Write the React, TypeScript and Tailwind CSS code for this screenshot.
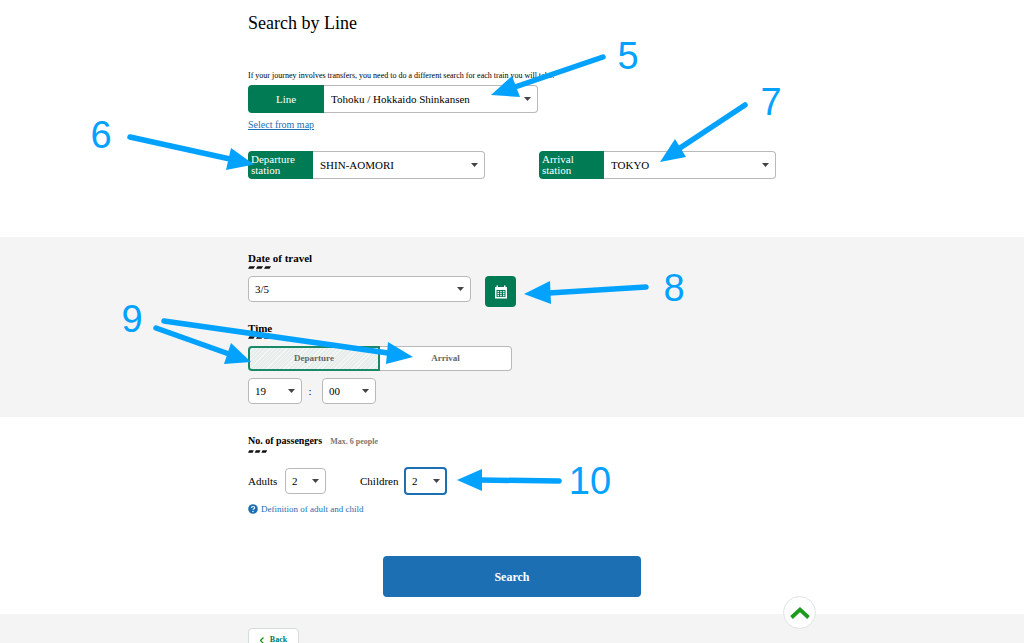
import type { ReactNode } from "react";
import clsx from "clsx";

type SelectProps = {
  id: string;
  options: string[];
  className?: string;
  selectClassName?: string;
};

function SelectBox({ id, options, className, selectClassName }: SelectProps) {
  return (
    <div className={clsx("relative", className)}>
      <select
        id={id}
        aria-label={id}
        className={clsx(
          "block h-full w-full appearance-none bg-white pr-5 text-[11px] leading-4 text-black outline-none",
          selectClassName
        )}
      >
        {options.map((o) => (
          <option key={o}>{o}</option>
        ))}
      </select>
      <svg viewBox="0 0 7 4" className="pointer-events-none absolute top-1/2 right-[7px] h-1 w-[7px] -translate-y-1/2" aria-hidden="true">
        <path d="M0 0h7L3.500 4z" fill="#444" />
      </svg>
    </div>
  );
}

function LabelledSelect({ label, id, options, className, labelClassName }: {
  label: string;
  id: string;
  options: string[];
  className: string;
  labelClassName: string;
}) {
  return (
    <div className={clsx("flex h-7", className)}>
      <label htmlFor={id} className={clsx("flex shrink-0 items-center rounded-l-[4px] bg-[#007b53] text-[11px] leading-[11px] text-white", labelClassName)}>
        {label}
      </label>
      <SelectBox id={id} options={options} className="flex-1" selectClassName="rounded-r-[4px] border border-l-0 border-[#b9b9b9] pl-[7px]" />
    </div>
  );
}

function Heading({ children, note }: { children: ReactNode; note?: string }) {
  return (
    <div>
      <h2 className={clsx("flex items-baseline gap-2 leading-[14px] font-bold text-black", note ? "text-[10px]" : "text-[11px]")}>
        {children}
        {note && <span className="text-[8px] text-[#777]">{note}</span>}
      </h2>
      <svg viewBox="0 0 24 3" className={clsx("mt-px h-[3px]", note ? "w-5" : "w-6")} preserveAspectRatio="none" aria-hidden="true">
        <path d="M1.500 .3h5.500l-1.500 2.400h-5.500zM9.500 .3h5.500l-1.500 2.400h-5.500zM17.500 .3h5.500l-1.500 2.400h-5.500z" fill="#111" />
      </svg>
    </div>
  );
}

const arrows = [
  { from: [603, 57], to: [515, 87], head: "491,95 512,76 520,97" },
  { from: [130, 137], to: [230, 159], head: "254,164.500 231,148 226,170" },
  { from: [745, 105], to: [680, 148], head: "660,162 675,139 686,157" },
  { from: [646, 287], to: [549, 293], head: "524,294 550,281 551,304" },
  { from: [164, 321], to: [388, 353], head: "413,357 388,342 386,364" },
  { from: [156, 328], to: [229, 354], head: "251,362 231,343 224,364" },
  { from: [559, 481], to: [480, 480], head: "457,480 482,469 482,491" },
];

const steps = [
  { n: "5", x: 628, y: 69 },
  { n: "6", x: 101, y: 148 },
  { n: "7", x: 771, y: 115 },
  { n: "8", x: 674, y: 301 },
  { n: "9", x: 132, y: 332 },
  { n: "10", x: 590, y: 494 },
];

// Numbered guide arrows over the form
function Guide() {
  return (
    <svg
      viewBox="0 0 1024 643"
      className="pointer-events-none absolute top-0 left-1/2 h-[643px] w-[1024px] max-w-none -translate-x-1/2"
      fill="#03a2ff"
      stroke="#03a2ff"
    >
      {arrows.map((a) => (
        <g key={a.head}>
          <line x1={a.from[0]} y1={a.from[1]} x2={a.to[0]} y2={a.to[1]} strokeWidth="5.500" strokeLinecap="round" />
          <polygon points={a.head} stroke="none" />
        </g>
      ))}
      {steps.map((s) => (
        <text key={s.n} x={s.x} y={s.y} textAnchor="middle" stroke="none" className="font-['Liberation_Sans',sans-serif] text-[38px]">
          {s.n}
        </text>
      ))}
    </svg>
  );
}

export default function App() {
  return (
    <div className="relative h-screen overflow-hidden bg-white font-['Liberation_Serif',serif] text-black">
      <section className="pt-3 pb-[58px]">
        <div className="mx-auto max-w-[528px]">
          <h1 className="text-lg leading-[22px]">Search by Line</h1>
          <p className="mt-9 text-[8px] leading-3 whitespace-nowrap">
            If your journey involves transfers, you need to do a different search for each train you will take.
          </p>
          <LabelledSelect
            label="Line"
            id="line"
            options={["Tohoku / Hokkaido Shinkansen"]}
            className="mt-[3px] w-[290px]"
            labelClassName="w-[76px] justify-center"
          />
          <a href="#map" className="mt-1.5 block w-fit text-[10px] leading-3 text-[#1d6fb3] underline">
            Select from map
          </a>
          <div className="mt-5 flex justify-between">
            <LabelledSelect label="Departure station" id="departure-station" options={["SHIN-AOMORI"]} className="w-[237px]" labelClassName="w-[65px] pl-[3px]" />
            <LabelledSelect label="Arrival station" id="arrival-station" options={["TOKYO"]} className="w-[237px]" labelClassName="w-[65px] pr-6 pl-[3px]" />
          </div>
        </div>
      </section>

      <section className="bg-[#f4f4f4] pt-3.5 pb-[13px]">
        <div className="mx-auto max-w-[528px]">
          <Heading>Date of travel</Heading>
          <div className="mt-[7px] flex gap-3.5">
            <SelectBox id="date" options={["3/5"]} className="h-[26px] w-[223px]" selectClassName="rounded-[4px] border border-[#b9b9b9] pl-1.5" />
            <button type="button" aria-label="Calendar" className="flex h-[31px] w-[31px] items-center justify-center rounded-[4px] bg-[#007b53]">
              <svg viewBox="0 0 14 14" className="h-3.5 w-3.5" aria-hidden="true">
                <path d="M1 2h1.500V.5h1.500V2h6V.5h1.500V2H13v11.500H1z" fill="#fff" />
                <path d="M2.500 5h9v7h-9z" fill="#007b53" />
                <path d="M3.500 6h1.500v1.200H3.500zM6.200 6h1.500v1.200H6.200zM9 6h1.500v1.200H9zM3.500 8h1.500v1.200H3.500zM6.200 8h1.500v1.200H6.200zM9 8h1.500v1.200H9zM3.500 10h1.500v1.200H3.500zM6.200 10h1.500v1.200H6.200zM9 10h1.500v1.200H9z" fill="#fff" />
              </svg>
            </button>
          </div>

          <div className="mt-3.5">
            <Heading>Time</Heading>
          </div>
          <div className="mt-[7px] flex h-[25px] w-[264px] text-[9px] font-bold text-[#666]">
            <label className="flex w-1/2 items-center justify-center rounded-l-[4px] border-2 border-[#1a8a66] bg-[#e6edea] bg-[repeating-linear-gradient(135deg,transparent_0_2px,#f3f7f5_2px_3px)]">
              <input type="radio" name="time" defaultChecked className="sr-only" />
              Departure
            </label>
            <label className="flex w-1/2 items-center justify-center rounded-r-[4px] border border-l-0 border-[#b9b9b9] bg-white">
              <input type="radio" name="time" className="sr-only" />
              Arrival
            </label>
          </div>
          <div className="mt-[7px] flex h-[26px] items-center">
            <SelectBox id="hour" options={["19"]} className="h-full w-[54px]" selectClassName="rounded-[4px] border border-[#b9b9b9] pl-1.5" />
            <span className="w-5 pr-1 text-center text-[11px]">:</span>
            <SelectBox id="minute" options={["00"]} className="h-full w-[54px]" selectClassName="rounded-[4px] border border-[#b9b9b9] pl-1.5" />
          </div>
        </div>
      </section>

      <section className="pt-[17px] pb-[17px]">
        <div className="mx-auto max-w-[528px]">
          <Heading note="Max. 6 people">No. of passengers</Heading>
          <div className="mt-3.5 flex h-7 items-center text-[11px]">
            <label htmlFor="adults" className="w-[37px]">Adults</label>
            <SelectBox id="adults" options={["2"]} className="h-[26px] w-[41px]" selectClassName="rounded-[4px] border border-[#b9b9b9] pl-1.5" />
            <label htmlFor="children" className="ml-[34px] w-11">Children</label>
            <SelectBox id="children" options={["2"]} className="h-7 w-[43px]" selectClassName="rounded-[4px] border-2 border-[#1d6fb3] pl-1.5" />
          </div>
          <a href="#definition" className="mt-2 flex w-fit items-center gap-[3px] text-[9px] leading-3 text-[#1d6fb3]">
            <svg viewBox="0 0 10 10" className="h-2.5 w-2.5" aria-hidden="true">
              <circle cx="5" cy="5" r="4.800" fill="#1d6fb3" />
              <path d="M3.500 4C3.500 2 6.600 2 6.600 3.900 6.600 4.900 5 4.900 5 6" fill="none" stroke="#fff" strokeWidth="1.100" />
              <circle cx="5" cy="7.500" r=".7" fill="#fff" />
            </svg>
            Definition of adult and child
          </a>
          <button type="submit" className="mx-auto mt-[41px] block h-[41px] w-[258px] rounded-[4px] bg-[#1d6fb3] text-xs font-bold text-white">
            Search
          </button>
        </div>
      </section>

      <footer className="bg-[#f4f4f4] pt-3.5 pb-10">
        <div className="relative mx-auto max-w-[528px]">
          <button type="button" className="flex h-6 w-[51px] items-center justify-center gap-1.5 rounded-[4px] border border-[#d3ddd9] bg-white text-[8px] font-bold text-[#007b53]">
            <svg viewBox="0 0 4 7" className="h-[7px] w-1" fill="none" stroke="#1c9a1c" strokeWidth="1.300" aria-hidden="true">
              <path d="M3.500 .5l-3 3 3 3" />
            </svg>
            Back
          </button>
          <a href="#top" aria-label="Back to top" className="absolute -top-8 left-full ml-[7px] flex h-[33px] w-[33px] items-center justify-center rounded-full border border-[#dde5e2] bg-white">
            <svg viewBox="0 0 20 14" className="h-3.5 w-5" fill="none" stroke="#1c9a1c" strokeWidth="3.800" aria-hidden="true">
              <path d="M1.500 11.500l8.500-8 8.500 8" />
            </svg>
          </a>
        </div>
      </footer>

      <Guide />
    </div>
  );
}
